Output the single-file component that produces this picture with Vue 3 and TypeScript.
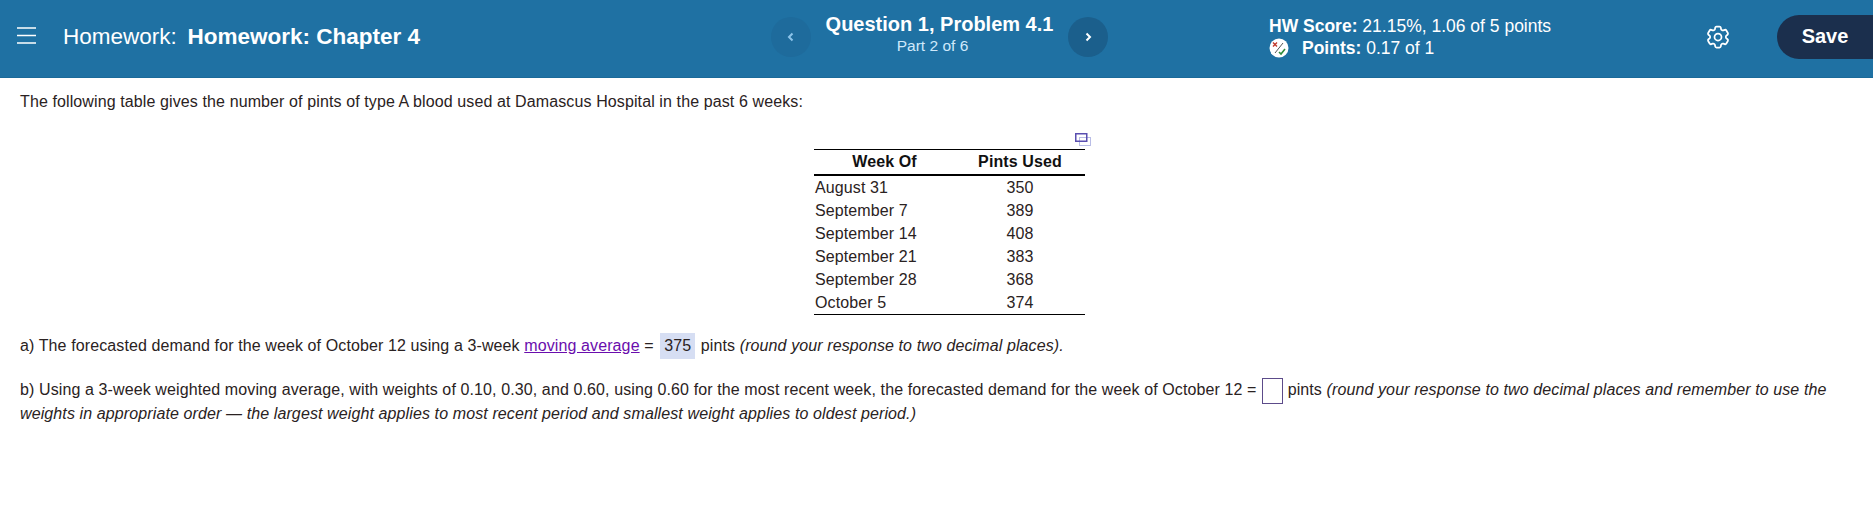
<template>
  <div class="page">
    <header class="topbar">
      <svg class="menu" width="19" height="17" viewBox="0 0 19 17" aria-label="Menu">
        <path d="M0 1h19M0 8.5h19M0 16h19" stroke="#fff" stroke-width="1.7" />
      </svg>
      <h1 class="title"><span class="title-kind">Homework:</span> <b>Homework: Chapter 4</b></h1>

      <nav class="question-nav">
        <button class="nav-btn dim" aria-label="Previous">
          <svg width="10" height="12" viewBox="0 0 10 12"><path d="M6.5 2.5 3 6l3.5 3.5" /></svg>
        </button>
        <div class="question">
          <div class="question-name">Question 1, Problem 4.1</div>
          <div class="question-part">Part 2 of 6</div>
        </div>
        <button class="nav-btn" aria-label="Next">
          <svg width="10" height="12" viewBox="0 0 10 12"><path d="M3.5 2.5 7 6 3.5 9.5" /></svg>
        </button>
      </nav>

      <div class="score">
        <div><b>HW Score:</b> {{ score }}</div>
        <div class="points">
          <svg class="points-icon" width="20" height="20" viewBox="0 0 20 20">
            <circle cx="10" cy="10" r="9.5" fill="#fff" />
            <path d="M4 4.5l4 4M8 4.5l-4 4" stroke="#c0392b" stroke-width="1.4" fill="none" />
            <path d="M6 15 14 5" stroke="#555" stroke-width="1" fill="none" />
            <path d="M10 14l2 2 4-5" stroke="#2e8b3a" stroke-width="1.6" fill="none" />
          </svg>
          <span><b>Points:</b> 0.17 of 1</span>
        </div>
      </div>

      <svg class="gear" width="28" height="28" viewBox="0 0 24 24" fill="none" stroke="#fff" stroke-width="1.5">
        <path d="M9.594 3.94c.09-.542.56-.94 1.11-.94h2.593c.55 0 1.02.398 1.11.94l.213 1.281c.063.374.313.686.645.87.074.04.147.083.22.127.325.196.72.257 1.075.124l1.217-.456a1.125 1.125 0 0 1 1.37.49l1.296 2.247a1.125 1.125 0 0 1-.26 1.431l-1.003.827c-.293.241-.438.613-.43.992a7.723 7.723 0 0 1 0 .255c-.008.378.137.75.43.991l1.004.827c.424.35.534.955.26 1.43l-1.298 2.247a1.125 1.125 0 0 1-1.369.491l-1.217-.456c-.355-.133-.75-.072-1.076.124a6.47 6.47 0 0 1-.22.128c-.331.183-.581.495-.644.869l-.213 1.281c-.09.543-.56.94-1.11.94h-2.594c-.55 0-1.019-.398-1.11-.94l-.213-1.281c-.062-.374-.312-.686-.644-.87a6.52 6.52 0 0 1-.22-.127c-.325-.196-.72-.257-1.076-.124l-1.217.456a1.125 1.125 0 0 1-1.369-.49l-1.297-2.247a1.125 1.125 0 0 1 .26-1.431l1.004-.827c.292-.24.437-.613.43-.991a6.932 6.932 0 0 1 0-.255c.007-.38-.138-.751-.43-.992l-1.004-.827a1.125 1.125 0 0 1-.26-1.43l1.297-2.247a1.125 1.125 0 0 1 1.37-.491l1.216.456c.356.133.751.072 1.076-.124.072-.044.146-.086.22-.128.332-.183.582-.495.644-.869l.214-1.28Z" />
        <circle cx="12" cy="12" r="3" />
      </svg>

      <button class="save">Save</button>
    </header>

    <main class="content">
      <p class="intro">The following table gives the number of pints of type A blood used at Damascus Hospital in the past 6 weeks:</p>

      <div class="table-wrap">
        <svg class="popout" width="16" height="14" viewBox="0 0 16 14" fill="none">
          <rect x="4.5" y="4.5" width="11" height="8" stroke="#b9bde6" />
          <rect x="0.75" y="0.75" width="11" height="7.5" stroke="#5a4fb0" stroke-width="1.5" />
        </svg>
        <table class="data">
          <thead>
            <tr><th>Week Of</th><th>Pints Used</th></tr>
          </thead>
          <tbody>
            <tr v-for="row in rows" :key="row.week">
              <td>{{ row.week }}</td>
              <td class="num">{{ row.pints }}</td>
            </tr>
          </tbody>
        </table>
      </div>

      <p class="part-a">a) The forecasted demand for the week of October 12 using a 3-week <a href="#" class="term">moving average</a> = <span class="answer">375</span> pints <i>(round your response to two decimal places).</i></p>

      <p class="part-b">b) Using a 3-week weighted moving average, with weights of 0.10, 0.30, and 0.60, using 0.60 for the most recent week, the forecasted demand for the week of October 12 = <span class="blank"></span> pints <i>(round your response to two decimal places and remember to use the weights in appropriate order — the largest weight applies to most recent period and smallest weight applies to oldest period.)</i></p>
    </main>
  </div>
</template>

<script setup lang="ts">
interface Row {
  week: string;
  pints: number;
}

const score = '21.15%, 1.06 of 5 points';

const rows: Row[] = [
  { week: 'August 31', pints: 350 },
  { week: 'September 7', pints: 389 },
  { week: 'September 14', pints: 408 },
  { week: 'September 21', pints: 383 },
  { week: 'September 28', pints: 368 },
  { week: 'October 5', pints: 374 },
];
</script>

<style scoped>
.page {
  font-family: "Liberation Sans", Arial, sans-serif;
  font-size: 16px;
  color: #2a2222;
}

.topbar {
  display: flex;
  align-items: center;
  height: 78px;
  padding-bottom: 3px;
  background: #1f71a3;
  color: #fff;
  border-bottom: 1px solid #1b6a99;
  box-sizing: border-box;
}

.menu {
  margin: 0 0 3px 17px;
  flex: none;
}

.title {
  margin: 0 0 0 27px;
  width: 708px;
  font-size: 22.5px;
  font-weight: 400;
  white-space: nowrap;
}

.title-kind {
  margin-right: 4.5px;
}

.question-nav {
  display: flex;
  align-items: center;
  width: 347px;
  flex: none;
}

.nav-btn {
  width: 40px;
  height: 40px;
  border: 0;
  border-radius: 50%;
  background: #1b5f8c;
  display: flex;
  align-items: center;
  justify-content: center;
  padding: 0;
  flex: none;
}

.nav-btn path {
  fill: none;
  stroke: #fff;
  stroke-width: 2;
}

.nav-btn.dim {
  background: #1e6b9c;
}

.nav-btn.dim path {
  stroke: #8cc4ea;
}

.question {
  width: 257px;
  margin-bottom: 6px;
  text-align: center;
  white-space: nowrap;
}

.question-name {
  font-size: 20px;
  font-weight: 700;
  line-height: 24px;
}

.question-part {
  margin-right: 14px;
  font-size: 15.5px;
  line-height: 20px;
  color: #cfe9fb;
}

.score {
  margin: 0 0 1px 151px;
  width: 435px;
  font-size: 17.5px;
  line-height: 22px;
  white-space: nowrap;
  flex: none;
}

.points {
  display: flex;
  align-items: center;
}

.points-icon {
  margin-right: 13px;
}

.gear {
  flex: none;
}

.save {
  margin-left: auto;
  width: 96px;
  height: 44px;
  padding-bottom: 2px;
  border: 0;
  border-radius: 22px 0 0 22px;
  background: #1b2f4d;
  color: #fff;
  font: 700 20px "Liberation Sans", Arial, sans-serif;
  flex: none;
}

.content {
  padding: 12px 20px 0;
  letter-spacing: 0.11px;
}

.intro {
  margin: 0;
  line-height: 24px;
}

.table-wrap {
  width: 271px;
  margin: 19px 0 0 794px;
  display: flex;
  flex-direction: column;
  align-items: flex-end;
}

.popout {
  margin: 0 -6px 2px 0;
}

.data {
  width: 271px;
  border-collapse: collapse;
  border-top: 1px solid #000;
  border-bottom: 1px solid #000;
  table-layout: fixed;
}

.data th {
  height: 24px;
  padding: 0;
  font-weight: 700;
  color: #111;
  border-bottom: 2px solid #000;
}

.data th:first-child {
  width: 141px;
}

.data td {
  height: 23px;
  padding: 0 0 0 1px;
  line-height: 23px;
}

.data .num {
  padding: 0;
  text-align: center;
}

.part-a {
  margin: 19px 0 0;
  line-height: 24px;
}

.term {
  color: #6a0dad;
}

.answer {
  display: inline-block;
  padding: 0 4px;
  margin: -1px 1px -1px 2px;
  line-height: 26px;
  background: #d6def3;
}

.part-b {
  margin: 20px 0 0;
  line-height: 24px;
}

.blank {
  display: inline-block;
  width: 21px;
  height: 26px;
  margin: -3px 0 -3px 1px;
  box-sizing: border-box;
  border: 1px solid #5c4b8a;
  vertical-align: middle;
}
</style>
